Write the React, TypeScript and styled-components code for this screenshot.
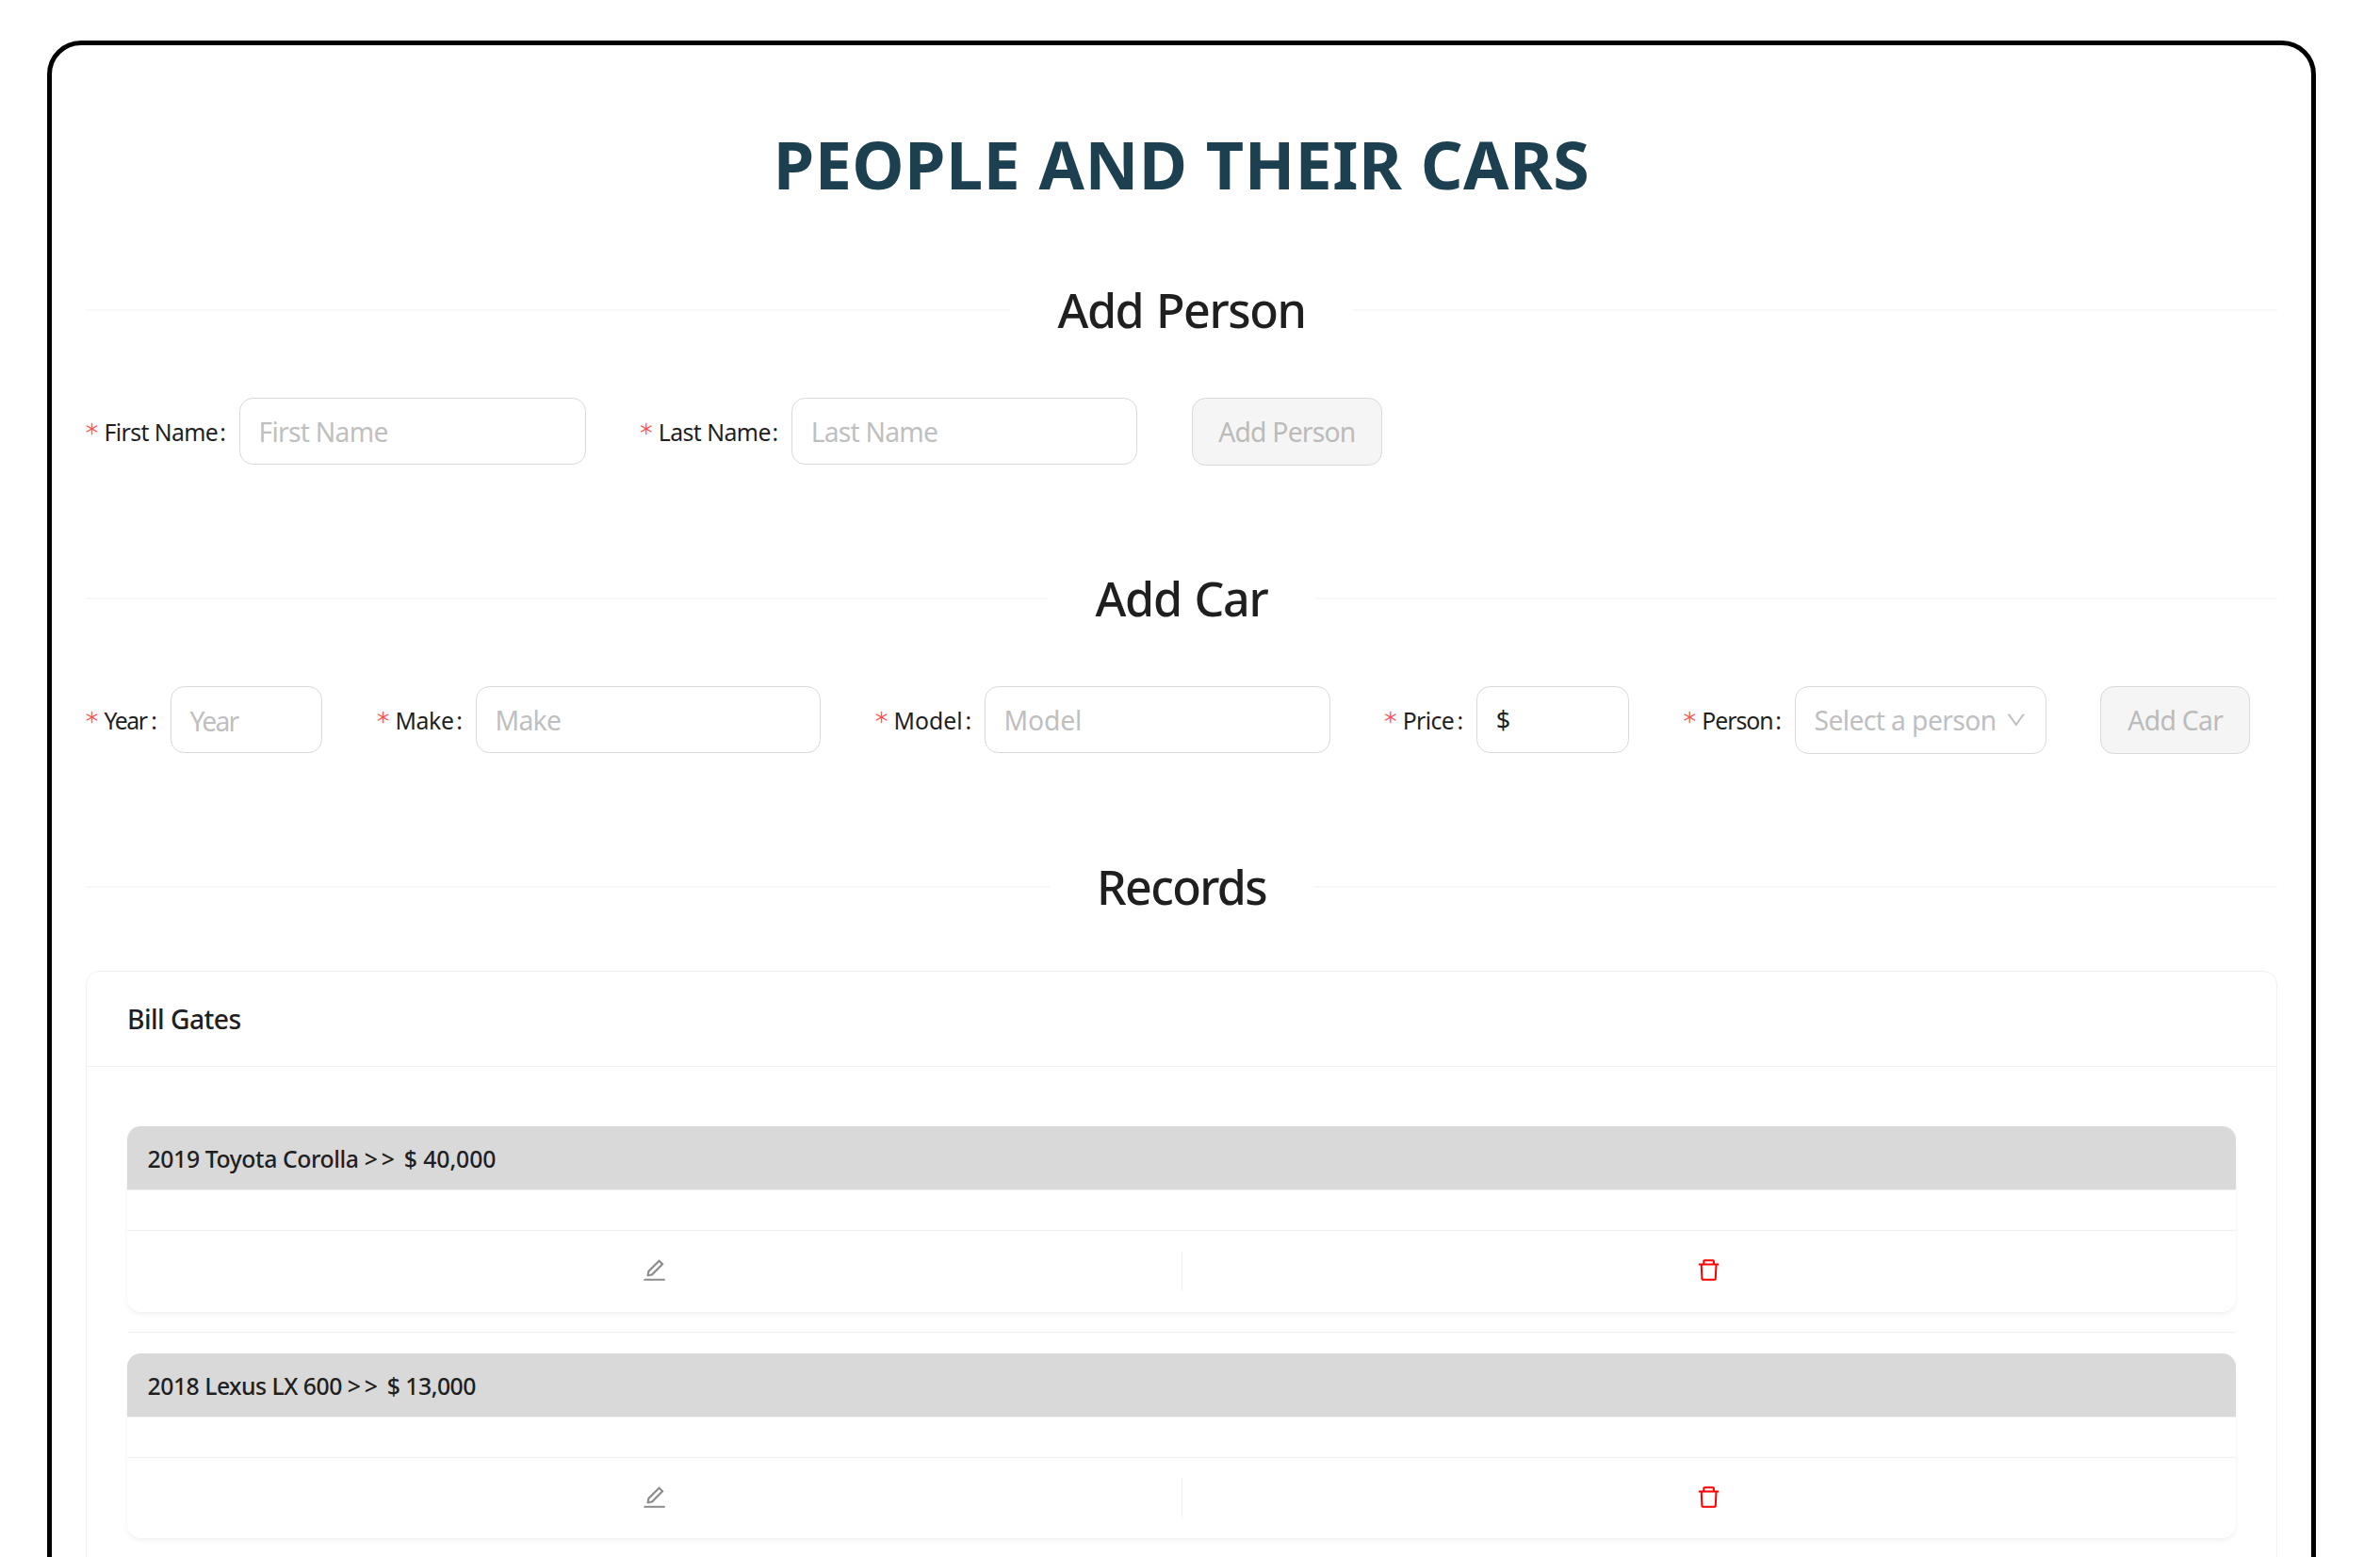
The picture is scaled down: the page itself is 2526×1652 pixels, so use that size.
import React from "react";
import styled, { createGlobalStyle } from "styled-components";

const GlobalStyle = createGlobalStyle`
  *, *::before, *::after { box-sizing: border-box; }
  html, body { margin: 0; padding: 0; background: #fff; overflow: hidden; }
  body { font-family: "Noto Sans", "Open Sans", sans-serif; color: #1f1f1f; }
`;

const Page = styled.div`
  height: 1652px;
  overflow: hidden;
  padding: 43px 68px 0 50px;
`;

const Frame = styled.main`
  height: 1800px;
  border: 5px solid #000;
  border-radius: 36px;
  padding: 76px 36px 0;
`;

const Title = styled.h1`
  margin: 0 0 64px;
  text-align: center;
  font-size: 70px;
  line-height: 101px;
  height: 100px;
  font-weight: 700;
  letter-spacing: 0.44px;
  word-spacing: 0.7px;
  color: #1c4050;
`;

const SectionHeading = styled.h2<{ $spacing: number; $after?: number }>`
  display: flex;
  align-items: center;
  margin: 0 0 ${(p) => p.$after ?? 54}px;
  height: 80px;
  font-size: 50.2px;
  line-height: 80px;
  font-weight: 500;
  letter-spacing: ${(p) => p.$spacing}px;
  word-spacing: 2px;
  white-space: nowrap;

  &::before,
  &::after {
    content: "";
    flex: 1;
    height: 2px;
    margin-top: 2px;
    background: #f7f7f7;
  }
`;

const HeadingText = styled.span`
  padding: 2px 50.4px 0;
`;

const Form = styled.form`
  display: flex;
  align-items: flex-start;
  gap: 57.6px;
  height: 72px;
  margin-bottom: 100px;
`;

const Item = styled.div`
  display: flex;
  align-items: flex-start;
`;

const Label = styled.label<{ $width: number; $spacing: number }>`
  display: flex;
  align-items: center;
  width: ${(p) => p.$width}px;
  height: 72px;
  padding-right: 14px;
  font-size: 24.8px;
  letter-spacing: ${(p) => p.$spacing}px;
  white-space: nowrap;
`;

const Star = styled.span`
  width: 19.5px;
  flex: none;
  padding-top: 4px;
  font-family: "DejaVu Sans Light", "DejaVu Sans", sans-serif;
  font-weight: 200;
  font-size: 26.5px;
  line-height: 30px;
  color: #ff4d4f;
  -webkit-text-stroke: 0.5px #ff4d4f;
`;

const Colon = styled.span`
  margin-left: auto;
  letter-spacing: 0;
`;

const Input = styled.div<{
  $width: number;
  $spacing?: number;
  $tall?: boolean;
  $filled?: boolean;
  $lowered?: boolean;
}>`
  display: flex;
  align-items: center;
  justify-content: space-between;
  width: ${(p) => p.$width}px;
  height: ${(p) => (p.$tall ? 72 : 71)}px;
  padding: ${(p) => (p.$lowered ? 2 : 0)}px 20px 0 19.5px;
  border: 1px solid #d9d9d9;
  border-radius: 14.4px;
  font-size: ${(p) => (p.$filled ? 27 : 28.3)}px;
  letter-spacing: ${(p) => p.$spacing ?? 0}px;
  color: ${(p) => (p.$filled ? "#1f1f1f" : "#bfbfbf")};
  white-space: nowrap;
`;

const SubmitButton = styled.button<{ $width: number; $spacing: number }>`
  width: ${(p) => p.$width}px;
  height: 72px;
  padding: 0;
  border: 1px solid #d9d9d9;
  border-radius: 14.4px;
  background: #f5f5f5;
  font: 400 28.3px "Noto Sans", "Open Sans", sans-serif;
  letter-spacing: ${(p) => p.$spacing}px;
  color: #bbb;
`;

const PersonCard = styled.section`
  height: 900px;
  border: 1px solid #f0f0f0;
  border-radius: 14.4px;
`;

const PersonHeader = styled.header`
  height: 101px;
  padding-left: 43px;
  border-bottom: 1px solid #f0f0f0;
  font-size: 28.3px;
  line-height: 100px;
  font-weight: 500;
  letter-spacing: -0.58px;
`;

const CarList = styled.ul`
  list-style: none;
  margin: 0;
  padding: 63.2px 43px 0;
`;

const CarRow = styled.li`
  padding-bottom: 21.6px;
  border-bottom: 1px solid #f0f0f0;
  margin-bottom: 21.8px;
`;

const CarCard = styled.article`
  height: 196.4px;
  border-radius: 14.4px;
  background: #fff;
  overflow: hidden;
  box-shadow:
    0 1.8px 3.6px 0 rgba(0, 0, 0, 0.03),
    0 1.8px 10.8px -1.8px rgba(0, 0, 0, 0.02),
    0 3.6px 7.2px 0 rgba(0, 0, 0, 0.02);
`;

const CarHeader = styled.header<{ $spacing: number }>`
  height: 68px;
  padding-left: 21.6px;
  border-bottom: 1px solid #f0f0f0;
  background: #d9d9d9;
  background-clip: padding-box;
  font-size: 24.8px;
  line-height: 69px;
  font-weight: 500;
  letter-spacing: ${(p) => p.$spacing}px;
`;

const Arrows = styled.span`
  letter-spacing: 3.8px;
`;

const Price = styled.span<{ $spacing: number }>`
  letter-spacing: ${(p) => p.$spacing}px;
`;

const CarBody = styled.div`
  height: 42px;
`;

const Actions = styled.div`
  display: flex;
  align-items: flex-start;
  border-top: 1px solid #f0f0f0;
  padding-top: 21px;
`;

const Action = styled.div<{ $color: string }>`
  flex: 1;
  display: flex;
  justify-content: center;
  height: 43px;
  padding-top: 7.8px;
  color: ${(p) => p.$color};

  & + & {
    border-left: 1px solid #f0f0f0;
  }
`;

const Icon = styled.svg<{ $size: number }>`
  display: block;
  flex: none;
  width: ${(p) => p.$size}px;
  height: ${(p) => p.$size}px;
  fill: currentColor;
`;

const DownIcon = () => (
  <Icon $size={21.6} viewBox="64 64 896 896">
    <path d="M884 256h-75c-5.1 0-9.9 2.5-12.9 6.6L512 654.2 227.9 262.6c-3-4.1-7.8-6.6-12.9-6.6h-75c-6.5 0-10.3 7.4-6.5 12.7l352.6 486.1c12.8 17.6 39 17.6 51.7 0l352.6-486.1c3.9-5.3.1-12.7-6.4-12.7z" />
  </Icon>
);

const EditIcon = () => (
  <Icon $size={25.2} viewBox="64 64 896 896">
    <path d="M257.7 752c2 0 4-.2 6-.5L431.9 722c2-.4 3.9-1.3 5.3-2.8l423.9-423.9a9.96 9.96 0 000-14.1L694.9 114.9c-1.9-1.9-4.4-2.9-7.1-2.9s-5.2 1-7.1 2.9L256.8 538.8c-1.5 1.5-2.4 3.3-2.8 5.3l-29.5 168.2a33.5 33.5 0 009.4 29.8c6.6 6.4 14.9 9.9 23.8 9.9zm67.4-174.4L687.8 215l73.3 73.3-362.7 362.6-88.9 15.7 15.6-89zM880 836H144c-17.7 0-32 14.3-32 32v36c0 4.4 3.6 8 8 8h784c4.4 0 8-3.6 8-8v-36c0-17.7-14.3-32-32-32z" />
  </Icon>
);

const DeleteIcon = () => (
  <Icon $size={25.2} viewBox="64 64 896 896">
    <path d="M360 184h-8c4.4 0 8-3.6 8-8v8h304v-8c0 4.4 3.6 8 8 8h-8v72h72v-80c0-35.3-28.7-64-64-64H352c-35.3 0-64 28.7-64 64v80h72v-72zm504 72H160c-17.7 0-32 14.3-32 32v32c0 4.4 3.6 8 8 8h60.4l24.7 523c1.6 34.1 29.8 61 63.9 61h454c34.2 0 62.3-26.8 63.9-61l24.7-523H888c4.4 0 8-3.6 8-8v-32c0-17.7-14.3-32-32-32zM731.3 840H292.7l-24.2-512h487l-24.2 512z" />
  </Icon>
);

type FieldProps = {
  label: string;
  labelWidth: number;
  labelSpacing: number;
  children: React.ReactNode;
};

const Field = ({ label, labelWidth, labelSpacing, children }: FieldProps) => (
  <Item>
    <Label $width={labelWidth} $spacing={labelSpacing}>
      <Star>*</Star>
      <span>{label}</span>
      <Colon>:</Colon>
    </Label>
    {children}
  </Item>
);

const cars = [
  { name: "2019 Toyota Corolla", price: "$ 40,000", spacing: -0.42, priceSpacing: -0.07 },
  { name: "2018 Lexus LX 600", price: "$ 13,000", spacing: -0.52, priceSpacing: -0.5 },
];

export default function App() {
  return (
    <>
      <GlobalStyle />
      <Page>
        <Frame>
          <Title>PEOPLE AND THEIR CARS</Title>

          <SectionHeading $spacing={-1.42}>
            <HeadingText>Add Person</HeadingText>
          </SectionHeading>
          <Form>
            <Field label="First Name" labelWidth={163} labelSpacing={-0.6}>
              <Input $width={367.6} $spacing={-0.75}>First Name</Input>
            </Field>
            <Field label="Last Name" labelWidth={161} labelSpacing={-0.54}>
              <Input $width={367} $spacing={-0.8}>Last Name</Input>
            </Field>
            <SubmitButton type="button" $width={202.2} $spacing={-0.78}>
              Add Person
            </SubmitButton>
          </Form>

          <SectionHeading $spacing={-1.28}>
            <HeadingText>Add Car</HeadingText>
          </SectionHeading>
          <Form>
            <Field label="Year" labelWidth={90} labelSpacing={-1.5}>
              <Input $lowered $width={161.4} $spacing={-1.8}>Year</Input>
            </Field>
            <Field label="Make" labelWidth={105} labelSpacing={-0.41}>
              <Input $width={366.5} $spacing={-0.72}>Make</Input>
            </Field>
            <Field label="Model" labelWidth={116} labelSpacing={0}>
              <Input $width={366.5} $spacing={-0.19}>Model</Input>
            </Field>
            <Field label="Price" labelWidth={98} labelSpacing={-0.64}>
              <Input $filled $width={162}>$</Input>
            </Field>
            <Field label="Person" labelWidth={118.2} labelSpacing={-1.02}>
              <Input $tall $width={266.8} $spacing={-0.61}>
                Select a person
                <DownIcon />
              </Input>
            </Field>
            <SubmitButton type="button" $width={158.8} $spacing={-0.7}>
              Add Car
            </SubmitButton>
          </Form>

          <SectionHeading $spacing={-1.66} $after={50}>
            <HeadingText>Records</HeadingText>
          </SectionHeading>
          <PersonCard>
            <PersonHeader>Bill Gates</PersonHeader>
            <CarList>
              {cars.map((car) => (
                <CarRow key={car.name}>
                  <CarCard>
                    <CarHeader $spacing={car.spacing}>
                      {car.name} <Arrows>&gt;&gt;</Arrows>{" "}
                      <Price $spacing={car.priceSpacing}>{car.price}</Price>
                    </CarHeader>
                    <CarBody />
                    <Actions>
                      <Action $color="#8c8c8c">
                        <EditIcon />
                      </Action>
                      <Action $color="#ff0000">
                        <DeleteIcon />
                      </Action>
                    </Actions>
                  </CarCard>
                </CarRow>
              ))}
            </CarList>
          </PersonCard>
        </Frame>
      </Page>
    </>
  );
}
